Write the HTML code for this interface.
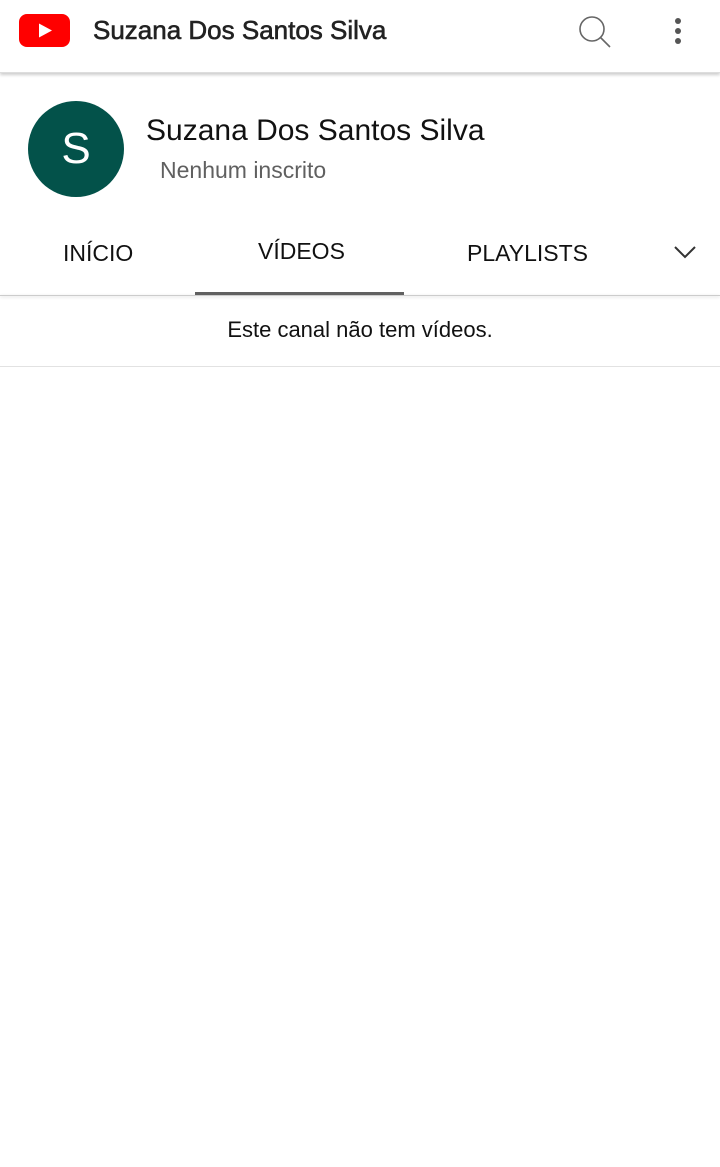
<!DOCTYPE html>
<html><head><meta charset="utf-8"><style>
body{margin:0;width:720px;height:1167px;background:#fff;font-family:"Liberation Sans",Roboto,sans-serif;color:#0f0f0f;position:relative;overflow:hidden}
.a{position:absolute;white-space:nowrap}
</style></head><body>
<div class="a" style="left:0;top:0;width:720px;height:72px;background:#fff;border-bottom:1px solid #ddd;box-shadow:0 2px 3px rgba(0,0,0,.2)"></div>
<svg class="a" style="left:19px;top:14px" width="52" height="34" viewBox="0 0 52 34"><rect x="0" y="0" width="51" height="33" rx="8" fill="#f00"/><path d="M20 9.5L33 16.5L20 23.5Z" fill="#fff"/></svg>
<div class="a" style="left:93px;top:15px;font-size:26px;color:#222;-webkit-text-stroke:0.6px #222">Suzana Dos Santos Silva</div>
<svg class="a" style="left:576px;top:13px" width="38" height="38" viewBox="0 0 38 38"><circle cx="16" cy="16" r="12" fill="none" stroke="#666" stroke-width="1.6"/><path d="M24.5 24.5L34 34" stroke="#666" stroke-width="1.6"/></svg>
<div class="a" style="left:675px;top:18px;width:6px;height:6px;border-radius:3px;background:#555"></div>
<div class="a" style="left:675px;top:28px;width:6px;height:6px;border-radius:3px;background:#555"></div>
<div class="a" style="left:675px;top:38px;width:6px;height:6px;border-radius:3px;background:#555"></div>
<div class="a" style="left:28px;top:101px;width:96px;height:96px;border-radius:50%;background:#03524a;color:#fff;font-size:44px;text-align:center;line-height:96px">S</div>
<div class="a" style="left:146px;top:114px;font-size:30px;color:#111">Suzana Dos Santos Silva</div>
<div class="a" style="left:160px;top:157px;font-size:23px;color:#606060">Nenhum inscrito</div>
<div class="a" style="left:63px;top:240px;font-size:23px;color:#111">INÍCIO</div>
<div class="a" style="left:258px;top:238px;font-size:23px;color:#111">VÍDEOS</div>
<div class="a" style="left:467px;top:240px;font-size:23px;color:#111">PLAYLISTS</div>
<svg class="a" style="left:672px;top:242px" width="26" height="20" viewBox="0 0 26 20"><path d="M3 5L13 15L23 5" fill="none" stroke="#333" stroke-width="2"/></svg>
<div class="a" style="left:0;top:295px;width:720px;height:1px;background:#ccc;box-shadow:0 1px 3px rgba(0,0,0,.2)"></div>
<div class="a" style="left:195px;top:292px;width:209px;height:3px;background:#606060"></div>
<div class="a" style="left:0;top:317px;width:720px;text-align:center;font-size:22px;color:#111">Este canal não tem vídeos.</div>
<div class="a" style="left:0;top:366px;width:720px;height:1px;background:#e2e2e2"></div>
</body></html>
